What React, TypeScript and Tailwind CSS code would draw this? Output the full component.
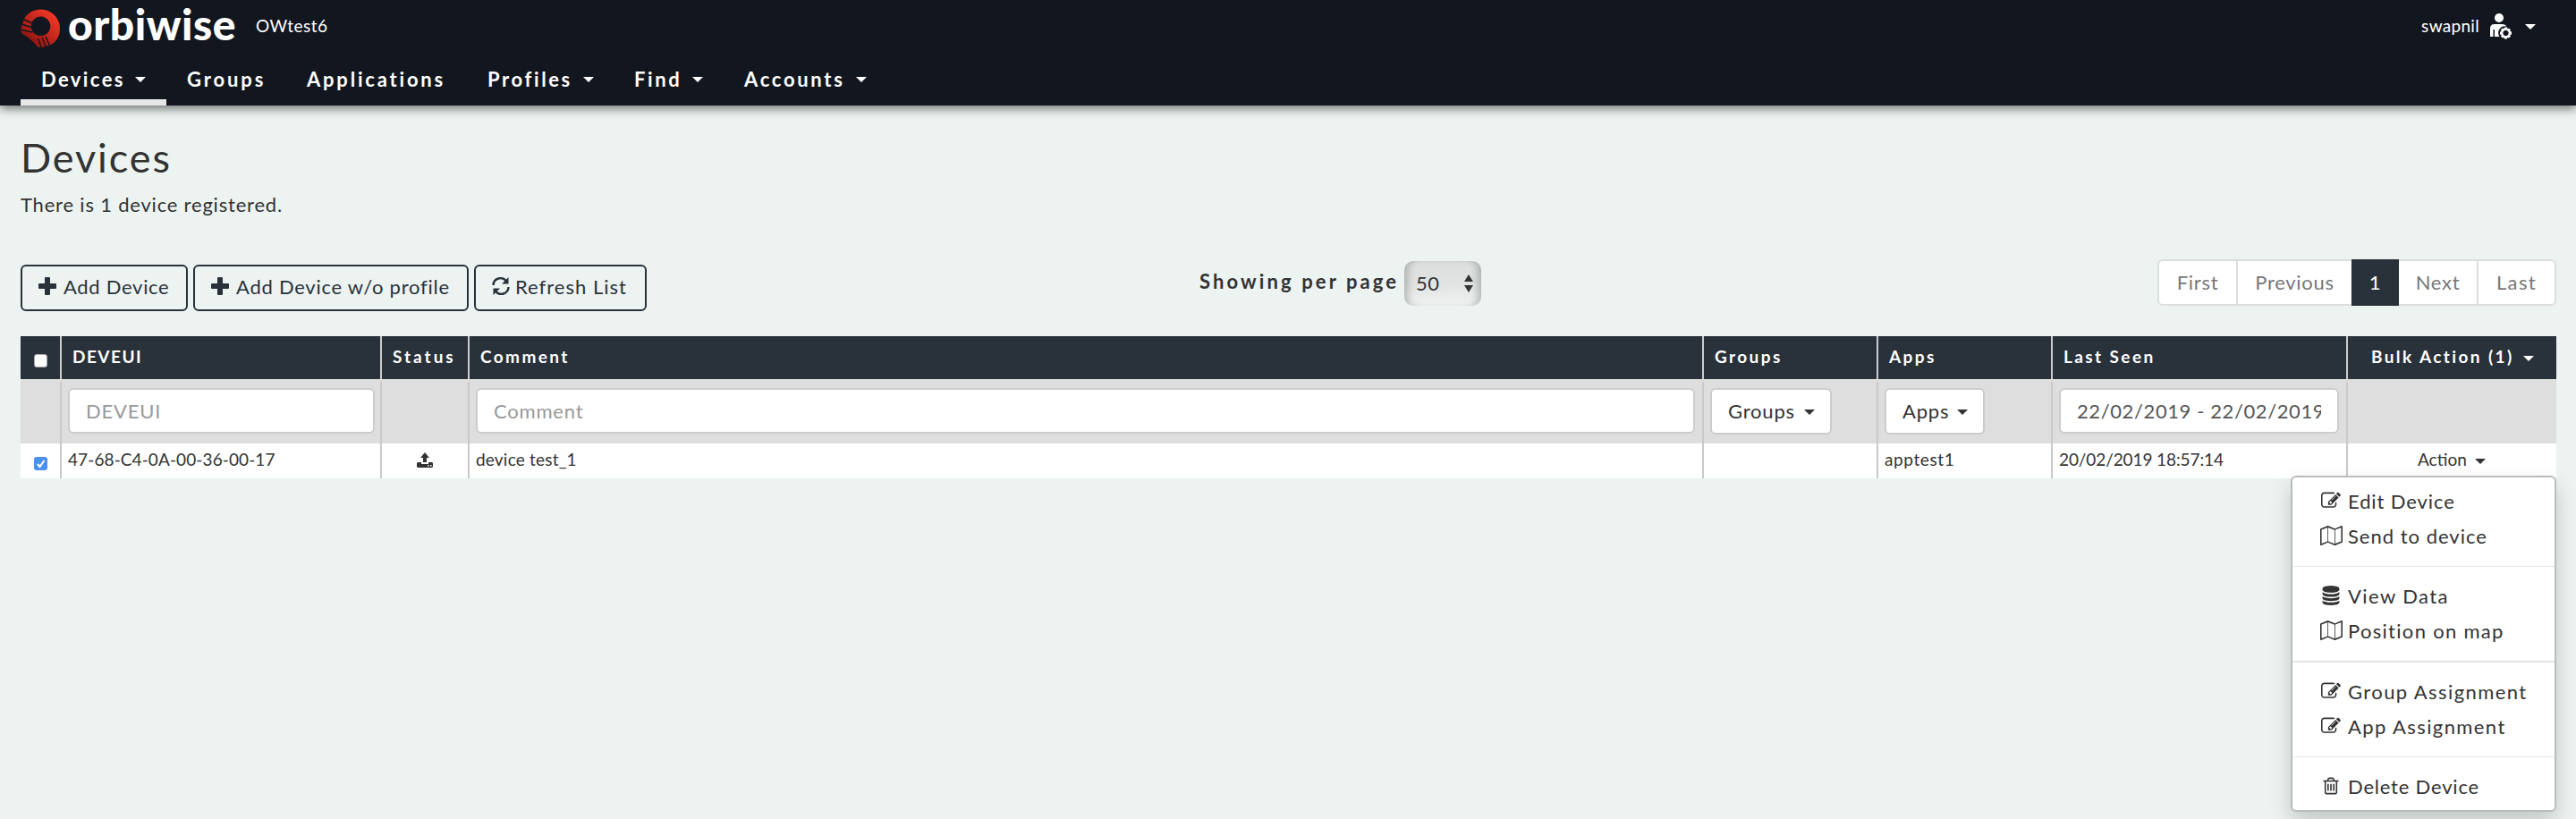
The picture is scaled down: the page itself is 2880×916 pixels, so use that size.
import type { ReactNode } from "react";

const I = {
  edit: ["0 0 1792 1792", "M888 1184l116-116-152-152-116 116v56h96v96h56zm440-720q-16-16-33 1l-350 350q-17 17-1 33t33-1l350-350q17-17 1-33zm80 594v190q0 119-84.5 203.5t-203.5 84.5h-832q-119 0-203.5-84.5t-84.5-203.5v-832q0-119 84.5-203.5t203.5-84.5h832q63 0 117 25 15 7 18 23 3 17-9 29l-49 49q-14 14-32 8-23-6-45-6h-832q-66 0-113 47t-47 113v832q0 66 47 113t113 47h832q66 0 113-47t47-113v-126q0-13 9-22l64-64q15-15 35-7t20 29zm-96-738l288 288-672 672h-288v-288zm444 132l-92 92-288-288 92-92q28-28 68-28t68 28l152 152q28 28 28 68t-28 68z"],
  map: ["0 0 2048 1792", "M2020 11q28 20 28 53v1408q0 20-11 36t-29 23l-640 256q-24 11-48 0l-616-246-616 246q-10 5-24 5-19 0-36-11-28-20-28-53v-1408q0-20 11-36t29-23l640-256q24-11 48 0l616 246 616-246q32-13 60 6zm-1284 143v1270l576 230v-1270zm-608 217v1270l544-217v-1270zm1792 1050v-1270l-544 217v1270z"],
  data: ["0 0 1792 1792", "M896 768q237 0 443-43t325-127v170q0 69-103 128t-280 93.5-385 34.5-385-34.5-280-93.5-103-128v-170q119 84 325 127t443 43zm0 768q237 0 443-43t325-127v170q0 69-103 128t-280 93.5-385 34.5-385-34.5-280-93.5-103-128v-170q119 84 325 127t443 43zm0-384q237 0 443-43t325-127v170q0 69-103 128t-280 93.5-385 34.5-385-34.5-280-93.5-103-128v-170q119 84 325 127t443 43zm0-1152q208 0 385 34.5t280 93.5 103 128v128q0 69-103 128t-280 93.5-385 34.5-385-34.5-280-93.5-103-128v-128q0-69 103-128t280-93.5 385-34.5z"],
  trash: ["0 0 1792 1792", "M704 736v576q0 14-9 23t-23 9h-64q-14 0-23-9t-9-23v-576q0-14 9-23t23-9h64q14 0 23 9t9 23zm256 0v576q0 14-9 23t-23 9h-64q-14 0-23-9t-9-23v-576q0-14 9-23t23-9h64q14 0 23 9t9 23zm256 0v576q0 14-9 23t-23 9h-64q-14 0-23-9t-9-23v-576q0-14 9-23t23-9h64q14 0 23 9t9 23zm128 724v-948h-896v948q0 22 7 40.5t14.5 27 10.5 8.5h832q3 0 10.5-8.5t14.5-27 7-40.5zm-672-1076h448l-48-117q-7-9-17-11h-317q-10 2-17 11zm928 32v64q0 14-9 23t-23 9h-96v948q0 83-47 143.5t-113 60.5h-832q-66 0-113-58.5t-47-141.5v-952h-96q-14 0-23-9t-9-23v-64q0-14 9-23t23-9h309l70-167q15-37 54-63t79-26h320q40 0 79 26t54 63l70 167h309q14 0 23 9t9 23z"],
} as const;

function Caret({ className = "" }: { className?: string }) {
  return (
    <svg viewBox="0 0 12 6" className={`h-[6px] w-[12px] shrink-0 fill-current ${className}`}>
      <path d="M0 0H12L6 6Z" />
    </svg>
  );
}

function NavItem({ label, caret, className }: { label: string; caret?: boolean; className: string }) {
  return (
    <a className={`flex h-[60px] shrink-0 items-center whitespace-nowrap ${className}`}>
      {label}
      {caret && <Caret className="mt-[2px] ml-auto" />}
    </a>
  );
}

function Btn({ className, children }: { className: string; children: ReactNode }) {
  return (
    <button className={`flex h-[52px] shrink-0 items-center rounded-[6px] border-2 border-[#29323a] pb-[3px] pl-[18px] whitespace-nowrap text-[#29323a] ${className}`}>
      {children}
    </button>
  );
}

function Plus() {
  return (
    <svg viewBox="0 0 20 20" className="mt-[-1px] mr-[8px] h-[20px] w-[20px] shrink-0 fill-current">
      <path d="M8 0h4q1 0 1 1v6h6q1 0 1 1v4q0 1-1 1h-6v6q0 1-1 1H8q-1 0-1-1v-6H1q-1 0-1-1V8q0-1 1-1h6V1q0-1 1-1z" />
    </svg>
  );
}

function MenuItem({ icon, label, className }: { icon: keyof typeof I; label: string; className: string }) {
  return (
    <li className="flex h-[39px] items-center">
      <span className="mt-[-3px] flex w-[26px] justify-center">
        <svg viewBox={I[icon][0]} className={`h-[22px] fill-current ${icon === "map" ? "w-[25px]" : "w-[22px]"}`}>
          <path d={I[icon][1]} />
        </svg>
      </span>
      <span className={`mt-[-3px] ml-[6px] whitespace-nowrap ${className}`}>{label}</span>
    </li>
  );
}

const cols = "grid grid-cols-[44px_358px_98px_1380px_195px_195px_330px_235px]";

export default function App() {
  return (
    <div className="h-[916px] w-[2880px] overflow-hidden bg-[#ecf3f1] font-['Lato',sans-serif] text-[22px] text-[#333]">
      <header className="relative h-[118px] bg-[#12171f] text-white shadow-[0_4px_10px_rgba(0,0,0,0.5)]">
        <div className="flex h-[58px] items-start pl-[22px]">
          <svg viewBox="0 0 46 46" className="mt-[9px] h-[46px] w-[46px] shrink-0">
            <defs>
              <linearGradient id="ring" x1="0.15" y1="0.85" x2="0.8" y2="0.15">
                <stop offset="0" stopColor="#86150f" />
                <stop offset="0.5" stopColor="#bd241b" />
                <stop offset="1" stopColor="#ee3524" />
              </linearGradient>
            </defs>
            <path fill="url(#ring)" fillRule="evenodd" d="M1 24L5 12A21.500 21.500 0 0 1 45 23A21 21 0 0 1 35 41L24 44.500L20 43.500Q14 35 2 28ZM23.500 9.500A10.800 10.800 0 1 0 23.510 9.500Z" />
            <path stroke="#12171f" strokeWidth="1.400" fill="none" d="M4 12.500L14 17M2 18L13 21.500M0 24L14 27M20.500 34L24.500 45M25 33L29.500 44M29 32L34 43" />
          </svg>
          <span className="mt-[1px] ml-[8px] w-[188px] text-[48px] leading-[52px] font-black tracking-[0.5px]">orbiwise</span>
          <span className="mt-[16px] ml-[22px] text-[19px] leading-[26px] tracking-[0.5px]">OWtest6</span>
          <span className="mt-[16px] mr-[11px] ml-auto text-[19px] leading-[26px] tracking-[0.3px]">swapnil</span>
          <svg viewBox="0 0 26 30" className="mt-[15px] h-[30px] w-[26px] fill-white">
            <circle cx="11" cy="5" r="5" />
            <path d="M1 26V17Q1 12 6 12H15Q18 12 19.500 14.500A7.500 7.500 0 0 0 11.500 26H6V18H4.500V26Z" />
            <path fillRule="evenodd" d="M17 15.500h3l.5 1.800 1.500-.9 2 2-.9 1.600 1.900.5v3l-1.900.5.9 1.600-2 2-1.500-.9-.5 1.800h-3l-.5-1.800-1.600.9-2-2 .9-1.600-1.800-.5v-3l1.800-.5-.9-1.600 2-2 1.600.9zM18.500 18.800a3.200 3.200 0 1 0 .01 0z" />
          </svg>
          <Caret className="mt-[27px] mr-[45px] ml-[14px]" />
        </div>
        <nav className="flex pl-[23px] text-[22px] font-bold">
          <NavItem label="Devices" caret className="w-[163px] border-b-[7px] border-[#e7e7e7] pt-[7px] pr-[23px] pl-[23px] tracking-[2.4px]" />
          <NavItem label="Groups" className="w-[134px] pl-[23px] tracking-[2.9px]" />
          <NavItem label="Applications" className="w-[201px] pl-[23px] tracking-[2.8px]" />
          <NavItem label="Profiles" caret className="w-[165px] pr-[22px] pl-[24px] tracking-[2.6px]" />
          <NavItem label="Find" caret className="w-[122px] pr-[22px] pl-[23px] tracking-[2.6px]" />
          <NavItem label="Accounts" caret className="w-[183px] pr-[22px] pl-[24px] tracking-[2.7px]" />
        </nav>
      </header>

      <main className="pr-[22px] pl-[23px]">
        <h1 className="pt-[30px] text-[45px] leading-[56px] tracking-[1.9px]">Devices</h1>
        <p className="mt-[10px] h-[30px] text-[22px] leading-[30px] tracking-[0.8px]">There is 1 device registered.</p>

        <div className="mt-[44px] flex h-[88px] items-start">
          <div className="flex w-[1318px] gap-[6px] pt-[8px]">
            <Btn className="w-[187px] tracking-[0.7px]"><Plus />Add Device</Btn>
            <Btn className="w-[308px] tracking-[0.75px]"><Plus />Add Device w/o profile</Btn>
            <Btn className="w-[193px] tracking-[1px]">
              <svg viewBox="0 0 20 20" className="mt-[-1px] mr-[6px] h-[20px] w-[20px] shrink-0 fill-none stroke-current stroke-[2.4]">
                <path d="M1.500 9A8 8 0 0 1 16 4.500M18.500 11A8 8 0 0 1 4 15.500" />
                <path className="fill-current stroke-none" d="M18.500 0V7.500H11ZM1.500 20V12.500H9Z" />
              </svg>
              Refresh List
            </Btn>
          </div>
          <span className="mt-[12px] w-[229px] text-[22px] leading-[30px] font-bold tracking-[3.1px] whitespace-nowrap">Showing per page</span>
          <div className="mt-[4px] flex h-[50px] w-[86px] items-center rounded-[10px] bg-gradient-to-b from-[#dcdfde] via-[#e0e3e2] to-[#f0f3f2] pr-[9px] pl-[13px] tracking-[0.5px] shadow-[inset_9px_0_8px_-5px_rgba(0,0,0,0.22),inset_-9px_0_8px_-5px_rgba(0,0,0,0.22)]">
            <span className="mt-[-2px]">50</span>
            <svg viewBox="0 0 10 20" className="ml-auto h-[20px] w-[10px] fill-[#333]"><path d="M0 8L5 0L10 8ZM0 12L5 20L10 12Z" /></svg>
          </div>
          <div className="mt-[2px] ml-auto flex h-[52px] text-[22px] leading-[48px] tracking-[0.7px] text-[#777]">
            <span className="flex w-[90px] justify-center rounded-l-[6px] border-2 border-[#ddd] bg-white">First</span>
            <span className="flex w-[127px] justify-center border-y-2 border-[#ddd] bg-white">Previous</span>
            <span className="flex w-[53px] justify-center bg-[#29323a] pt-[2px] text-white">1</span>
            <span className="flex w-[89px] justify-center border-y-2 border-r-2 border-[#ddd] bg-white">Next</span>
            <span className="flex w-[87px] justify-center rounded-r-[6px] border-y-2 border-r-2 border-[#ddd] bg-white tracking-[1.4px]">Last</span>
          </div>
        </div>

        <section className="w-[2835px]">
          <div className={`${cols} h-[48px] bg-[#29323a] text-[19px] font-bold tracking-[2.4px] text-white [&>*]:flex [&>*]:items-center [&>*+*]:border-l-2 [&>*+*]:border-[#ccc] [&>*+*]:pb-[1px] [&>*+*]:pl-[12px]`}>
            <div className="pt-[6px] pl-[15px]"><i className="h-[15px] w-[15px] rounded-[3px] border border-[#aaa] bg-white" /></div>
            <div className="tracking-[1.500px]">DEVEUI</div>
            <div className="tracking-[3px]">Status</div>
            <div>Comment</div>
            <div>Groups</div>
            <div>Apps</div>
            <div>Last Seen</div>
            <div className="pl-[26px]!">Bulk Action (1)<Caret className="mt-[2px] ml-[10px]" /></div>
          </div>
          <div className="h-[3px] bg-[#dedede]" />
          <div className={`${cols} h-[69px] bg-[#dedede] tracking-[0.8px] [&>*]:pt-[7px] [&>*+*]:border-l-2 [&>*+*]:border-[#c9c9c9] [&>*+*]:pl-[7px]`}>
            <div />
            <div><div className="flex h-[51px] w-[343px] items-center rounded-[6px] border-2 border-[#ccc] bg-white pb-[1px] pl-[18px] text-[#999]">DEVEUI</div></div>
            <div />
            <div><div className="flex h-[51px] w-[1363px] items-center rounded-[6px] border-2 border-[#ccc] bg-white pb-[1px] pl-[18px] text-[#999]">Comment</div></div>
            <div><div className="flex h-[52px] w-[136px] items-center rounded-[6px] border-2 border-[#ccc] bg-white pb-[2px] pl-[18px]">Groups<Caret className="mt-[4px] mr-[17px] ml-auto" /></div></div>
            <div><div className="flex h-[52px] w-[112px] items-center rounded-[6px] border-2 border-[#ccc] bg-white pb-[2px] pl-[18px]">Apps<Caret className="mt-[4px] mr-[17px] ml-auto" /></div></div>
            <div><div className="flex h-[51px] w-[313px] items-center rounded-[6px] border-2 border-[#ccc] bg-white px-[18px] pb-[1px] tracking-[0.6px] text-[#555]"><span className="overflow-hidden whitespace-nowrap">22/02/2019 - 22/02/2019</span></div></div>
            <div />
          </div>
          <div className={`${cols} h-[39px] bg-white text-[19px] leading-[36px] [&>*+*]:border-l-2 [&>*+*]:border-[#c9c9c9] [&>*+*]:pl-[7px]`}>
            <div className="pt-[15px] pl-[15px]">
              <svg viewBox="0 0 15 15" className="h-[15px] w-[15px]"><rect width="15" height="15" rx="3" fill="#4a90f0" /><path d="M4 8L6.500 11L11.500 4" fill="none" stroke="#fff" strokeWidth="2" /></svg>
            </div>
            <div className="tracking-[0.1px]">47-68-C4-0A-00-36-00-17</div>
            <div className="pt-[10px] pl-[39px]!">
              <svg viewBox="0 0 18 17" className="h-[17px] w-[18px] fill-[#333]"><path d="M9 0L14 6H11V11H7V6H4ZM1 11H5V13H13V11H17L18 12V16L17 17H1L0 16V12ZM12 14V15.500H13.500V14ZM15 14V15.500H16.500V14Z" fillRule="evenodd" /></svg>
            </div>
            <div className="tracking-[0.2px]">device test_1</div>
            <div />
            <div className="tracking-[0.6px]">apptest1</div>
            <div className="tracking-[-0.1px]">20/02/2019 18:57:14</div>
            <div className="relative">
              <div className="flex h-[36px] items-center pl-[71px]">Action<Caret className="mt-[4px] ml-[9px]" /></div>
              <ul className="absolute top-[36px] right-0 z-10 h-[376px] w-[297px] rounded-[6px] border-2 border-[#b9bdbc] bg-white pt-[8px] pl-[30px] text-[22px] leading-[39px] shadow-[0_12px_24px_rgba(0,0,0,0.175)]">
                <MenuItem icon="edit" label="Edit Device" className="tracking-[0.9px]" />
                <MenuItem icon="map" label="Send to device" className="tracking-[1px]" />
                <li className="mt-[13px] mb-[14px] -ml-[30px] h-px bg-[#e5e5e5]" />
                <MenuItem icon="data" label="View Data" className="tracking-[1.4px]" />
                <MenuItem icon="map" label="Position on map" className="tracking-[1.3px]" />
                <li className="mt-[13px] mb-[14px] -ml-[30px] h-[2px] bg-[#e5e5e5]" />
                <MenuItem icon="edit" label="Group Assignment" className="tracking-[1.4px]" />
                <MenuItem icon="edit" label="App Assignment" className="tracking-[1.4px]" />
                <li className="mt-[13px] mb-[14px] -ml-[30px] h-px bg-[#e5e5e5]" />
                <MenuItem icon="trash" label="Delete Device" className="tracking-[0.8px]" />
              </ul>
            </div>
          </div>
        </section>
      </main>
    </div>
  );
}
